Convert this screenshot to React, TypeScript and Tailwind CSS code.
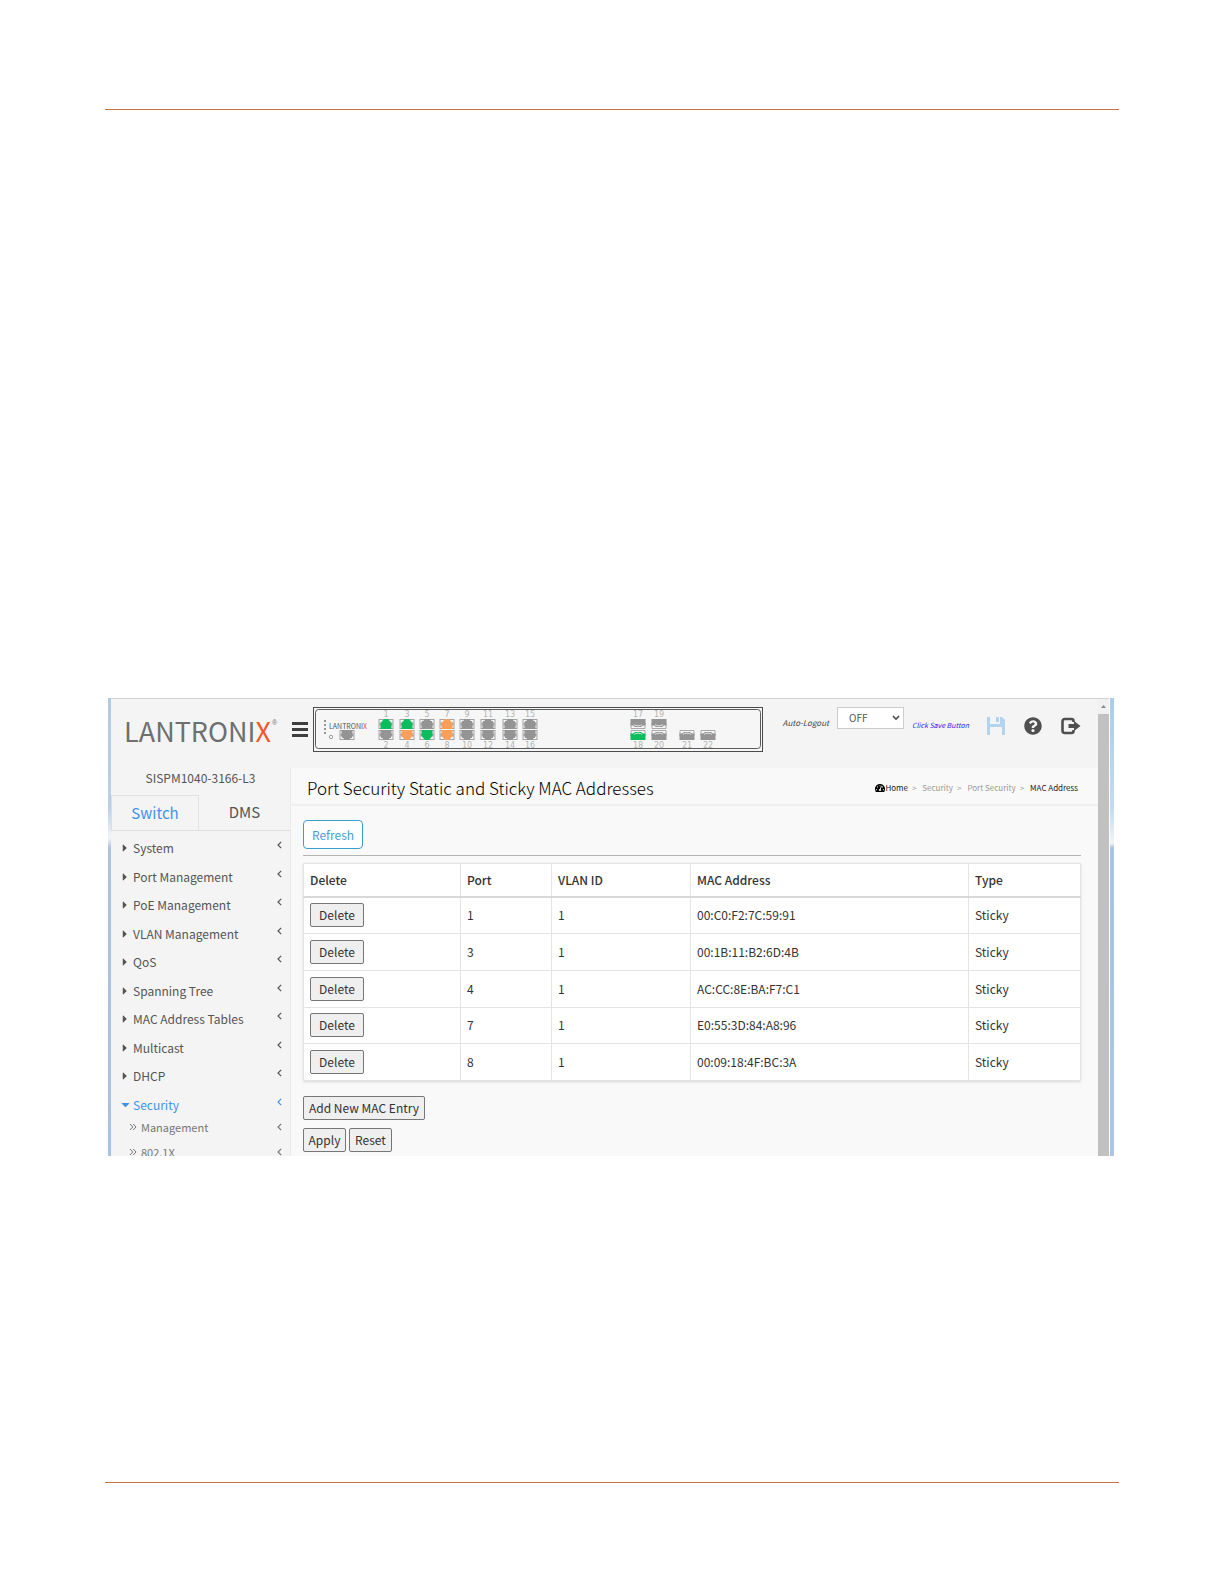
import { FaCaretDown, FaCaretRight, FaQuestionCircle, FaTachometerAlt } from "react-icons/fa";

const MENU = [
  "System",
  "Port Management",
  "PoE Management",
  "VLAN Management",
  "QoS",
  "Spanning Tree",
  "MAC Address Tables",
  "Multicast",
  "DHCP",
  "Security",
];

const SUBMENU = ["Management", "802.1X"];

const ROWS = [
  { port: 1, vlan: 1, mac: "00:C0:F2:7C:59:91", type: "Sticky" },
  { port: 3, vlan: 1, mac: "00:1B:11:B2:6D:4B", type: "Sticky" },
  { port: 4, vlan: 1, mac: "AC:CC:8E:BA:F7:C1", type: "Sticky" },
  { port: 7, vlan: 1, mac: "E0:55:3D:84:A8:96", type: "Sticky" },
  { port: 8, vlan: 1, mac: "00:09:18:4F:BC:3A", type: "Sticky" },
];

const GREY = "#949494";
const GREEN = "#0bbd5c";
const ORANGE = "#fb9f5b";

// x is the centre of a stacked pair on the faceplate
const COPPER = [
  { x: 73, top: GREEN, bottom: GREY, n: 1 },
  { x: 94, top: GREEN, bottom: ORANGE, n: 3 },
  { x: 114, top: GREY, bottom: GREEN, n: 5 },
  { x: 134, top: ORANGE, bottom: ORANGE, n: 7 },
  { x: 154, top: GREY, bottom: GREY, n: 9 },
  { x: 175, top: GREY, bottom: GREY, n: 11 },
  { x: 197, top: GREY, bottom: GREY, n: 13 },
  { x: 217, top: GREY, bottom: GREY, n: 15 },
];

function Jack({ x, y, fill, flip }: { x: number; y: number; fill: string; flip?: boolean }) {
  return (
    <g transform={`translate(${x} ${y})${flip ? " scale(1 -1)" : ""}`}>
      <rect x="-7.5" y="-5" width="15" height="10" fill="#a4a4a4" />
      <rect x="-6.5" y="-4" width="13" height="8" fill="#f6f6f6" />
      <path d="M-6.5 -1.5H-5V1.5H-6.5ZM6.5 -1.5H5V1.5H6.5Z" fill="#a4a4a4" />
      <path d="M-5.5 5V-1L-2 -5H2L5.5 -1V5Z" fill={fill} />
      {fill === GREY && <path d="M-5 5V-3H-3V-5H3V-3H5V5Z" fill={fill} />}
    </g>
  );
}

function Sfp({ x, y, fill, flip }: { x: number; y: number; fill: string; flip?: boolean }) {
  return (
    <g transform={`translate(${x} ${y})${flip ? " scale(1 -1)" : ""}`}>
      <path d="M-7 1V-4.5H7V1" fill="none" stroke="#a8a8a8" />
      <path d="M-7.5 5V-1.5H-5L-3 -3H3L5 -1.5H7.5V5Z" fill={fill} />
      <path d="M-4 -0.5Q-3 -1.8 0 -1.8T4 -0.5" fill="none" stroke="#f6f6f6" strokeWidth="0.8" />
    </g>
  );
}

function Num({ x, y, n }: { x: number; y: number; n: number }) {
  return (
    <text x={x} y={y} textAnchor="middle" fontSize="8" fill="#b4b4b4" fontFamily="DejaVu Sans, sans-serif">
      {n}
    </text>
  );
}

function Faceplate() {
  return (
    <svg width="451" height="46" viewBox="0 0 451 46" className="shrink-0">
      <rect x="0.5" y="0.5" width="449" height="44" fill="#f6f6f6" stroke="#4c4c4c" />
      <rect x="2.5" y="2.5" width="445" height="39" rx="3" fill="#f6f6f6" stroke="#5c5c5c" />
      <path d="M12 13V29" stroke="#777" strokeWidth="1.5" strokeDasharray="2 2" />
      <circle cx="18" cy="30" r="1.7" fill="none" stroke="#888" strokeWidth="0.8" />
      <Jack x={34} y={28} fill={GREY} flip />
      <text x="16" y="22" fontSize="7" fill="#555" fontFamily="Noto Sans CJK SC, sans-serif">
        LANTRONI<tspan fill="#e8542a">X</tspan>
      </text>
      {COPPER.map((p) => (
        <g key={p.n}>
          <Jack x={p.x} y={17} fill={p.top} />
          <Jack x={p.x} y={28} fill={p.bottom} flip />
          <Num x={p.x} y={10} n={p.n} />
          <Num x={p.x} y={41} n={p.n + 1} />
        </g>
      ))}
      <Sfp x={325} y={17} fill={GREY} flip />
      <Sfp x={346} y={17} fill={GREY} flip />
      <Sfp x={325} y={28} fill={GREEN} />
      <Sfp x={346} y={28} fill={GREY} />
      <Sfp x={374} y={28} fill={GREY} />
      <Sfp x={395} y={28} fill={GREY} />
      <Num x={325} y={10} n={17} />
      <Num x={346} y={10} n={19} />
      <Num x={325} y={41} n={18} />
      <Num x={346} y={41} n={20} />
      <Num x={374} y={41} n={21} />
      <Num x={395} y={41} n={22} />
    </svg>
  );
}

function Logo() {
  return (
    <svg width="158" height="46" viewBox="0 0 158 46" role="img" aria-label="Lantronix">
      <text x="0" y="34" fontSize="27" fill="#6d6f71" fontFamily="Noto Sans CJK SC, sans-serif">
        LANTRONI<tspan fill="#f0592b">X</tspan>
      </text>
      <text x="148" y="17" fontSize="7" fill="#6d6f71" fontFamily="Liberation Sans, sans-serif">
        ®
      </text>
    </svg>
  );
}

function ChevronLeft() {
  return (
    <svg width="5" height="8" viewBox="0 0 5 8" className="shrink-0">
      <path d="M4.2 0.8L1 4L4.2 7.2" fill="none" stroke="currentColor" strokeWidth="1.2" />
    </svg>
  );
}

function TopBar() {
  return (
    <header className="flex h-[69px] shrink-0 items-start bg-[#f4f4f4] pt-2">
      <div className="flex h-12 w-[181px] shrink-0 items-center pl-[13px]">
        <Logo />
      </div>
      <button aria-label="Toggle menu" className="flex h-11 w-[21px] shrink-0 items-center">
        <svg width="16" height="15" viewBox="0 0 16 15" fill="#3f3f3f">
          <path d="M0 0H16V3H0ZM0 6H16V9H0ZM0 12H16V15H0Z" />
        </svg>
      </button>
      <Faceplate />
      <div className="flex flex-1 items-start justify-end pr-[17px]">
        <label htmlFor="auto-logout" className="mr-2 py-2 text-[8px] leading-4 whitespace-nowrap text-[#444] italic">
          Auto-Logout
        </label>
        <div className="relative mr-2">
          <select
            id="auto-logout"
            className="block h-[22px] w-[67px] appearance-none border border-[#ccc] bg-white pl-[11px] text-[10px] leading-5 text-[#555]"
          >
            <option>OFF</option>
            <option>10 min</option>
          </select>
          <svg width="8" height="6" viewBox="0 0 8 6" className="pointer-events-none absolute top-2 right-1">
            <path d="M1 1L4 4.2L7 1" fill="none" stroke="#444" strokeWidth="1.6" />
          </svg>
        </div>
        <span className="mr-[18px] py-[10px] text-[7px] leading-4 whitespace-nowrap text-[#2a1fff] italic">
          Click Save Button
        </span>
        <div className="flex items-center gap-[19px] pt-[10px]">
          <button aria-label="Save">
            <svg width="18" height="18" viewBox="0 0 18 18" fill="#b3d3ee">
              <path d="M0 0H3V7H13V0H15L18 3V18H15V10H3V18H0Z" />
              <path d="M9 0H12V5H9Z" />
            </svg>
          </button>
          <button aria-label="Help">
            <FaQuestionCircle size={18} color="#4f4f4f" />
          </button>
          <button aria-label="Log out">
            <svg width="20" height="18" viewBox="0 0 20 18">
              <path
                d="M12.5 5V4Q12.5 2 10.5 2H4Q1.5 2 1.5 4.5V13.5Q1.5 16 4 16H10.5Q12.5 16 12.5 14V13"
                fill="none"
                stroke="#4f4f4f"
                strokeWidth="2.6"
              />
              <path d="M7.5 7H13V4L19.5 9L13 14V11H7.5Z" fill="#4f4f4f" />
            </svg>
          </button>
        </div>
      </div>
    </header>
  );
}

function Sidebar() {
  return (
    <nav className="w-[180px] shrink-0 border-r border-[#ebebeb] bg-[#f4f4f4] text-[#555]">
      <p className="h-[27px] text-center text-[12px] leading-5">SISPM1040-3166-L3</p>
      <div className="flex h-9 border-b border-l border-[#dedede] text-[15px]">
        <button className="w-[87px] border-t border-r border-[#e2e2e2] text-[#3f94ea]">Switch</button>
        <button className="flex-1">DMS</button>
      </div>
      <ul className="flex h-[288px] flex-col pt-[3px]">
        {MENU.map((item) => {
          const open = item === "Security";
          return (
            <li key={item} className="flex-1">
              <a href="#" className={`flex h-full items-center pr-2 pl-2 text-[12px] ${open ? "text-[#3f94ea]" : ""}`}>
                <span className="w-[14px]">{open ? <FaCaretDown size={13} /> : <FaCaretRight size={12} />}</span>
                <span className="flex-1">{item}</span>
                <span className="pb-[6px]">
                  <ChevronLeft />
                </span>
              </a>
            </li>
          );
        })}
      </ul>
      <ul className="text-[11px] text-[#777]">
        {SUBMENU.map((item) => (
          <li key={item} className="h-[25px]">
            <a href="#" className="flex items-center pr-2 pl-[18px] leading-4">
              <svg width="8" height="8" viewBox="0 0 8 8" className="mr-1">
                <path d="M1 1L3.8 4L1 7M4.2 1L7 4L4.2 7" fill="none" stroke="currentColor" />
              </svg>
              <span className="flex-1">{item}</span>
              <ChevronLeft />
            </a>
          </li>
        ))}
      </ul>
    </nav>
  );
}

const BUTTON = "h-6 rounded-[2px] border border-[#767676] bg-[#efefef] text-[12px] leading-5 text-[#333]";
const CELL = "border border-[#e4e4e4] px-[6px] py-0";
const HEAD = "border border-b-2 border-[#e4e4e4] border-b-[#d8d8d8] px-[6px] py-0 font-medium";

function MacTable() {
  return (
    <table className="h-[218px] w-full table-fixed border-collapse border border-[#d4d4d4] bg-white text-left text-[12px] text-[#333] shadow-sm">
      <thead>
        <tr className="h-[33px]">
          <th className={`${HEAD} w-[157px]`}>Delete</th>
          <th className={`${HEAD} w-[91px]`}>Port</th>
          <th className={`${HEAD} w-[139px]`}>VLAN ID</th>
          <th className={HEAD}>MAC Address</th>
          <th className={`${HEAD} w-[112px]`}>Type</th>
        </tr>
      </thead>
      <tbody>
        {ROWS.map((row) => (
          <tr key={row.mac}>
            <td className={CELL}>
              <button className={`${BUTTON} block w-[54px]`}>Delete</button>
            </td>
            <td className={CELL}>{row.port}</td>
            <td className={CELL}>{row.vlan}</td>
            <td className={CELL}>{row.mac}</td>
            <td className={CELL}>{row.type}</td>
          </tr>
        ))}
      </tbody>
    </table>
  );
}

function Content() {
  return (
    <main className="min-w-0 flex-1 bg-[#f9f9f9]">
      <div className="flex h-[38px] items-center justify-between border-b-2 border-[#efefef] pt-1 pr-5 pl-4">
        <h1 className="text-[17px] leading-6 font-light text-black">Port Security Static and Sticky MAC Addresses</h1>
        <ol className="flex items-center text-[8px] leading-4 text-[#999]">
          <li className="flex items-center text-[#222]">
            <FaTachometerAlt size={10} color="#000" />
            <a href="#">Home</a>
          </li>
          <li className="pr-[2px] pl-1">&gt;</li>
          <li className="pl-1">Security</li>
          <li className="pr-[2px] pl-1">&gt;</li>
          <li className="pl-1">Port Security</li>
          <li className="pr-[2px] pl-1">&gt;</li>
          <li className="pl-1 text-[#222]">MAC Address</li>
        </ol>
      </div>
      <div className="pt-[14px] pr-[17px] pl-3">
        <button className="block h-[29px] w-[60px] rounded border border-[#3d9fd0] bg-white text-[12px] text-[#4a9fd0]">
          Refresh
        </button>
        <hr className="mt-[6px] mb-[7px] border-[#b4b4b4]" />
        <MacTable />
        <div className="mt-[15px] flex flex-col items-start gap-2">
          <button className={`${BUTTON} px-[5px]`}>Add New MAC Entry</button>
          <div className="flex gap-[3px]">
            <button className={`${BUTTON} w-[43px]`}>Apply</button>
            <button className={`${BUTTON} w-[43px]`}>Reset</button>
          </div>
        </div>
      </div>
    </main>
  );
}

export default function App() {
  return (
    <div className="bg-white px-[105px] pt-[109px] font-['Noto_Sans_CJK_SC','Noto_Sans',sans-serif]">
      <hr className="border-[#cb7446]" />
      {/* the browser window cuts the sidebar off below its fold */}
      <section className="mx-[3px] mt-[588px] mb-[326px] flex h-[458px] overflow-hidden pr-[2px]">
        <div className="w-[3px] bg-[linear-gradient(#b0cae6_0,#b9d0e9_110px,#f2f5f9_140px,#a9c4e0_150px,#a5c3e2_100%)]" />
        <div className="flex min-w-0 flex-1 border-t border-[#cfd3d8]">
          <div className="flex min-w-0 flex-1 flex-col">
            <TopBar />
            <div className="flex">
              <Sidebar />
              <Content />
            </div>
          </div>
          <div className="w-[11px] bg-[#c1c1c1]">
            <div className="flex h-[15px] items-center justify-center bg-[#f1f1f1]">
              <svg width="5" height="3" viewBox="0 0 5 3">
                <path d="M0 3L2.5 0L5 3Z" fill="#8a8a8a" />
              </svg>
            </div>
          </div>
        </div>
        <div className="ml-px w-1 bg-[linear-gradient(#a9cdea_0,#c2dbf0_110px,#f2f5f9_145px,#a9c4e2_150px,#a9c6e6_100%)]" />
      </section>
      <hr className="border-[#cb7446]" />
    </div>
  );
}
